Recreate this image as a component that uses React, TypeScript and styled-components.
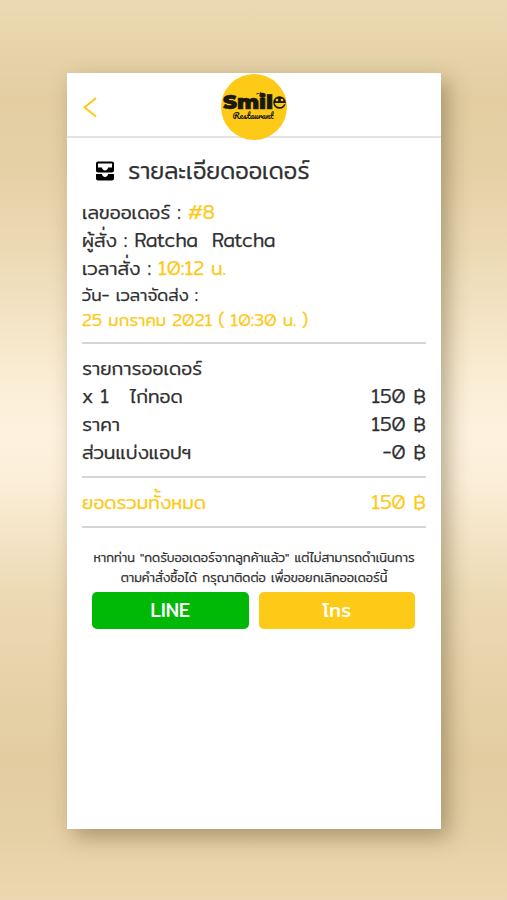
import React from "react";
import styled, { createGlobalStyle } from "styled-components";

const INK = "#303030";
const YELLOW = "#fcca17";
const FONT = `Mitr, Prompt, "Noto Sans Thai", "Noto Sans", sans-serif`;

const GlobalStyle = createGlobalStyle`
  * { box-sizing: border-box; }
  body {
    margin: 0;
    font-family: ${FONT};
    font-weight: 300;
    color: ${INK};
    -webkit-text-stroke: 0.25px currentColor;
  }
`;

const Backdrop = styled.main`
  height: 900px;
  padding: 73px 66px 71px 67px;
  overflow: hidden;
  background: linear-gradient(
    180deg,
    #ebdab3 0%, #e3cda1 11%, #e5d0a5 18%, #ecdab4 28%, #fbeed6 43%,
    #fef2df 48%, #fcefd9 53%, #ecdab4 66%, #e3cca0 84%, #e4cea3 90%, #ebd8b0 100%
  );
`;

const Card = styled.article`
  height: 756px;
  background: #fff;
  box-shadow: 7px 8px 20px rgba(95, 80, 45, 0.45);
`;

const Header = styled.header`
  display: grid;
  grid-template-columns: 1fr 66px 1fr;
  align-items: center;
  height: 65px;
  border-bottom: 2px solid #e3e3e3;
`;

const BackButton = styled.button`
  display: flex;
  width: 18px;
  margin: 0 0 0 14px;
  padding: 0;
  border: 0;
  background: none;
`;

const Logo = styled.svg`
  width: 66px;
  height: 66px;
  margin-top: 1px;
  -webkit-text-stroke: 0;
`;

const Title = styled.h1`
  display: flex;
  align-items: center;
  gap: 11px;
  height: 32px;
  margin: 17px 0 11px 26px;
  font-size: 23.3px;
  font-weight: 300;
  line-height: 32px;
  white-space: nowrap;
`;

const TitleIcon = styled.svg`
  width: 24px;
  height: 24px;
`;

const Content = styled.section`
  margin: 0 15px;
`;

const Row = styled.div<{ $small?: boolean; $accent?: boolean }>`
  display: flex;
  justify-content: space-between;
  height: ${(p) => (p.$small ? 25 : 28)}px;
  line-height: ${(p) => (p.$small ? 25 : 28)}px;
  font-size: ${(p) => (p.$small ? 17 : 19)}px;
  color: ${(p) => (p.$accent ? YELLOW : INK)};
  white-space: pre;
  word-spacing: -1px;
`;

const Accent = styled.span`
  color: ${YELLOW};
`;

const Price = styled.span`
  word-spacing: 0;
`;

const Group = styled.div<{ $top: number; $bottom: number }>`
  padding: ${(p) => p.$top}px 0 ${(p) => p.$bottom}px;
  border-bottom: 2px solid #d5d5d5;
`;

const Note = styled.p`
  margin: 20px 0 4px;
  font-size: 12.6px;
  line-height: 20px;
  text-align: center;
  white-space: nowrap;
`;

const Actions = styled.div`
  display: grid;
  grid-template-columns: 1fr 1fr;
  gap: 10px;
  margin: 0 11px 0 10px;
`;

const ActionButton = styled.button<{ $color: string }>`
  height: 37px;
  padding: 0;
  border: 0;
  border-radius: 5px;
  background: ${(p) => p.$color};
  color: #fff;
  font: 400 19px/37px ${FONT};
  -webkit-text-stroke: 0;
`;

function SmileLogo() {
  return (
    <Logo viewBox="0 0 66 66">
      <circle cx="33" cy="33" r="33" fill={YELLOW} />
      <g fill="#1b190c">
        <text x="2" y="34.500" fontFamily="Montserrat, Roboto, sans-serif" fontSize="19.500" fontWeight="900"
          stroke="#1b190c" strokeWidth=".5" textLength="50" lengthAdjust="spacingAndGlyphs">Smil</text>
        <path d="M34.500 20.500q2-2.500 4-1 1-2.500 2.500-.3 3-.5 3 1.600-5-1.700-9.500-.3z" />
        <circle cx="58.500" cy="28.500" r="6.300" />
        <text x="11.500" y="44.500" fontFamily='Pacifico, "Liberation Serif", serif' fontSize="8.500"
          textLength="41" lengthAdjust="spacingAndGlyphs">Restaurant</text>
      </g>
      <g fill={YELLOW}>
        <circle cx="56" cy="26" r="1.300" />
        <circle cx="61" cy="26" r="1.300" />
        <path d="M53.500 29h11v1.300h-1.500q-1 2.800-4.500 2.800t-5-4.100z" />
      </g>
    </Logo>
  );
}

export default function App() {
  return (
    <>
      <GlobalStyle />
      <Backdrop>
        <Card>
          <Header>
            <BackButton aria-label="Back">
              <svg width="18" height="22" viewBox="0 0 18 22" fill="none" stroke={YELLOW} strokeWidth="2">
                <path d="M15 2 3.500 11.500 15 20.500" />
              </svg>
            </BackButton>
            <SmileLogo />
          </Header>
          <Title>
            <TitleIcon viewBox="0 0 24 24" fill="#000">
              <path d="M19 2.500H5c-1.100 0-2 .9-2 2v7c0 1.100.9 2 2 2h14c1.100 0 2-.9 2-2v-7c0-1.100-.9-2-2-2zm0 6h-4c0 1.620-1.380 3-3 3s-3-1.380-3-3H5v-4h14v4zm-4 6.500h6v4.500c0 1.100-.9 2-2 2H5c-1.100 0-2-.9-2-2V15h6c0 1.660 1.340 3 3 3s3-1.340 3-3z" />
            </TitleIcon>
            <span>รายละเอียดออเดอร์</span>
          </Title>
          <Content>
            <Group $top={0} $bottom={10}>
              <Row><span>เลขออเดอร์ : <Accent>#8</Accent></span></Row>
              <Row>ผู้สั่ง : Ratcha  Ratcha</Row>
              <Row><span>เวลาสั่ง : <Accent>10:12 น.</Accent></span></Row>
              <Row $small>วัน- เวลาจัดส่ง :</Row>
              <Row $small $accent>25 มกราคม 2021 ( 10:30 น. )</Row>
            </Group>
            <Group $top={10} $bottom={10}>
              <Row>รายการออเดอร์</Row>
              <Row><span>x 1   ไก่ทอด</span><Price>150 ฿</Price></Row>
              <Row><span>ราคา</span><Price>150 ฿</Price></Row>
              <Row><span>ส่วนแบ่งแอปฯ</span><Price>-0 ฿</Price></Row>
            </Group>
            <Group $top={10} $bottom={10}>
              <Row $accent><span>ยอดรวมทั้งหมด</span><Price>150 ฿</Price></Row>
            </Group>
            <Note>
              หากท่าน "กดรับออเดอร์จากลูกค้าแล้ว" แต่ไม่สามารถดำเนินการ
              <br />
              ตามคำสั่งซื้อได้ กรุณาติดต่อ เพื่อขอยกเลิกออเดอร์นี้
            </Note>
            <Actions>
              <ActionButton $color="#00b907">LINE</ActionButton>
              <ActionButton $color={YELLOW}>โทร</ActionButton>
            </Actions>
          </Content>
        </Card>
      </Backdrop>
    </>
  );
}
